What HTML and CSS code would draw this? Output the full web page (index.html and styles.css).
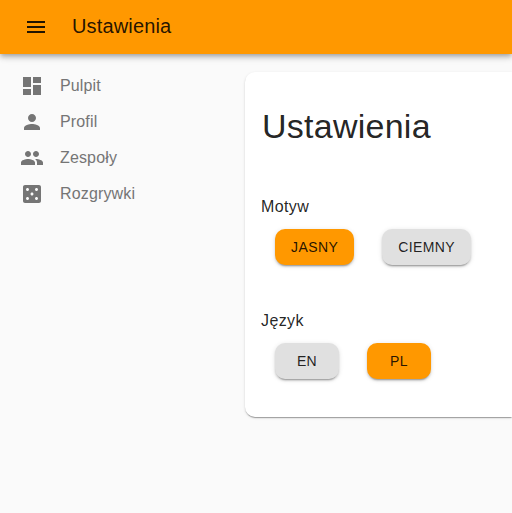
FILE: index.html
```html
<!DOCTYPE html>
<html lang="pl">
<head>
<meta charset="utf-8">
<title>Ustawienia</title>
<link rel="stylesheet" href="styles.css">
</head>
<body>
<header class="appbar">
  <svg class="icon" viewBox="0 0 24 24"><path d="M3 18h18v-2H3v2zm0-5h18v-2H3v2zm0-7v2h18V6H3z"/></svg>
  <span class="appbar-title">Ustawienia</span>
</header>
<div class="layout">
  <nav class="nav">
    <a class="nav-item"><svg class="icon" viewBox="0 0 24 24"><path d="M3 13h8V3H3v10zm0 8h8v-6H3v6zm10 0h8V11h-8v10zm0-18v6h8V3h-8z"/></svg><span>Pulpit</span></a>
    <a class="nav-item"><svg class="icon" viewBox="0 0 24 24"><path d="M12 12c2.21 0 4-1.79 4-4s-1.79-4-4-4-4 1.79-4 4 1.79 4 4 4zm0 2c-2.67 0-8 1.34-8 4v2h16v-2c0-2.66-5.33-4-8-4z"/></svg><span>Profil</span></a>
    <a class="nav-item"><svg class="icon" viewBox="0 0 24 24"><path d="M16 11c1.66 0 2.99-1.34 2.99-3S17.66 5 16 5c-1.66 0-3 1.34-3 3s1.34 3 3 3zm-8 0c1.66 0 2.99-1.34 2.99-3S9.66 5 8 5C6.34 5 5 6.34 5 8s1.34 3 3 3zm0 2c-2.33 0-7 1.17-7 3.5V19h14v-2.500c0-2.330-4.670-3.500-7-3.500zm8 0c-.29 0-.62.02-.97.05 1.160.84 1.970 1.970 1.970 3.450V19h6v-2.500c0-2.330-4.670-3.500-7-3.500z"/></svg><span>Zespoły</span></a>
    <a class="nav-item"><svg class="icon" viewBox="0 0 24 24"><path d="M19 3H5c-1.100 0-2 .9-2 2v14c0 1.100.9 2 2 2h14c1.100 0 2-.9 2-2V5c0-1.100-.9-2-2-2zM7.500 18c-.83 0-1.500-.67-1.500-1.500S6.670 15 7.500 15s1.500.67 1.500 1.500S8.330 18 7.500 18zm0-9C6.670 9 6 8.330 6 7.500S6.670 6 7.500 6 9 6.670 9 7.500 8.330 9 7.500 9zm4.500 4.500c-.83 0-1.500-.67-1.500-1.500s.67-1.500 1.500-1.500 1.500.67 1.500 1.500-.67 1.500-1.500 1.500zm4.500 4.500c-.83 0-1.500-.67-1.500-1.500s.67-1.500 1.500-1.500 1.500.67 1.500 1.500-.67 1.500-1.500 1.500zm0-9c-.83 0-1.500-.67-1.500-1.500S15.670 6 16.500 6s1.500.67 1.500 1.500S17.330 9 16.500 9z"/></svg><span>Rozgrywki</span></a>
  </nav>
  <main class="card">
    <h1 class="card-title">Ustawienia</h1>
    <section class="setting">
      <div class="label">Motyw</div>
      <div class="buttons">
        <button class="btn btn-primary">JASNY</button>
        <button class="btn">CIEMNY</button>
      </div>
    </section>
    <section class="setting">
      <div class="label">Język</div>
      <div class="buttons">
        <button class="btn">EN</button>
        <button class="btn btn-primary">PL</button>
      </div>
    </section>
  </main>
</div>
</body>
</html>
```
FILE: styles.css
```css
* { box-sizing: border-box; }
body {
  margin: 0;
  height: 513px;
  overflow: hidden;
  background: #fafafa;
  color: rgba(0, 0, 0, .87);
  font: 16px/24px "Liberation Sans", Arial, sans-serif;
}
.icon { width: 24px; height: 24px; flex: none; fill: currentColor; }
.appbar {
  position: relative;
  display: flex;
  align-items: center;
  gap: 24px;
  height: 54px;
  padding: 0 24px;
  background: #ff9800;
  box-shadow: 0 2px 4px -1px rgba(0, 0, 0, .2), 0 4px 5px 0 rgba(0, 0, 0, .14), 0 1px 10px 0 rgba(0, 0, 0, .12);
}
.appbar-title { padding-bottom: 2px; font-size: 20px; line-height: 32px; letter-spacing: .15px; }
.layout { display: flex; align-items: flex-start; }
.nav { flex: none; width: 245px; padding: 14px 20px; color: #757575; letter-spacing: .15px; }
.nav-item { display: flex; align-items: center; gap: 16px; height: 36px; }
.card {
  flex: 1;
  height: 345px;
  margin-top: 18px;
  padding: 33px 16px 0;
  border-radius: 10px 0 0 10px;
  background: #fff;
  box-shadow: 0 2px 1px -1px rgba(0, 0, 0, .2), 0 1px 1px 0 rgba(0, 0, 0, .14), 0 1px 3px 0 rgba(0, 0, 0, .12);
}
.card-title { margin: 0 0 48px 1px; font-size: 34px; line-height: 42px; font-weight: 400; letter-spacing: .25px; }
.setting { height: 114px; }
.label { line-height: 24px; letter-spacing: .4px; }
.buttons { display: flex; gap: 28px; padding: 10px 14px; }
.btn {
  min-width: 64px;
  height: 36px;
  padding: 0 16px;
  border: 0;
  border-radius: 10px;
  background: #e0e0e0;
  color: rgba(0, 0, 0, .87);
  font: 14px/24px "Liberation Sans", Arial, sans-serif;
  letter-spacing: .4px;
  box-shadow: 0 3px 1px -2px rgba(0, 0, 0, .2), 0 2px 2px 0 rgba(0, 0, 0, .14), 0 1px 5px 0 rgba(0, 0, 0, .12);
}
.btn-primary { background: #ff9800; }
```
